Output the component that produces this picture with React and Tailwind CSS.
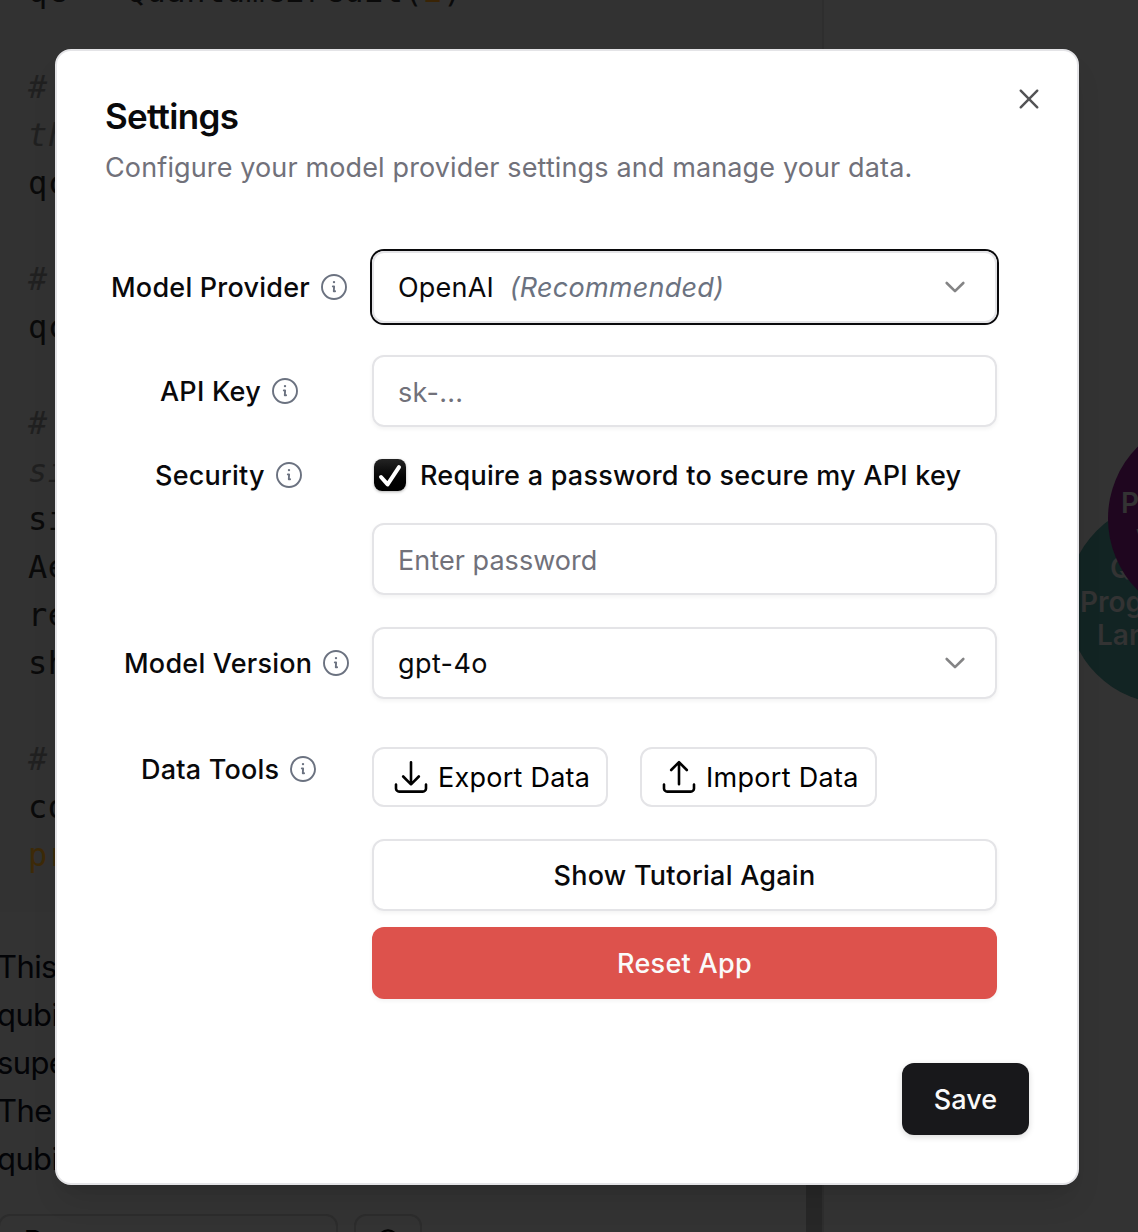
import React from "react";
import { RxCross2 } from "react-icons/rx";

function InfoIcon() {
  return (
    <svg viewBox="0 0 28 28" className="size-7 shrink-0" fill="none" stroke="#6b7280" strokeWidth="1.9" strokeLinecap="round" strokeLinejoin="round">
      <circle cx="14" cy="14" r="12" />
      <circle cx="14" cy="9.1" r="1.2" fill="#6b7280" stroke="none" />
      <path d="M12.8 13.4h1.3l-.3 4.9h1.3" />
    </svg>
  );
}

function ChevronIcon() {
  return (
    <svg viewBox="0 0 32 32" className="-mt-[2px] size-8 shrink-0" fill="none" stroke="#848485" strokeWidth="2.6" strokeLinecap="round" strokeLinejoin="round">
      <path d="M7.7 12l8.3 8.2 8.3-8.2" />
    </svg>
  );
}

function TrayIcon({ up }) {
  return (
    <svg viewBox="0 0 36 36" className="-mt-[2px] size-9 shrink-0" fill="none" stroke="#000" strokeWidth="2.6" strokeLinecap="round" strokeLinejoin="round">
      <path d="M3 25.5v3.9a3.2 3.2 0 0 0 3.2 3.2h23.6a3.2 3.2 0 0 0 3.2-3.2v-3.9" />
      <path d={up ? "M18 25.3V3.4M10.2 11l7.8-7.8 7.8 7.8" : "M18 3.2v22M10.2 17.5l7.8 7.8 7.8-7.8"} />
    </svg>
  );
}

function Label({ children, className }) {
  return (
    <div className={`flex h-10 items-center gap-[10px] whitespace-nowrap font-medium tracking-[0.22px] ${className}`}>
      <span className="pt-[2px]">{children}</span>
      <InfoIcon />
    </div>
  );
}

const field = "flex h-[72px] w-[625px] items-center rounded-xl border-2 border-[#e4e4e7] px-6 shadow-[0_2px_4px_rgba(0,0,0,0.05)]";

function CodeLine({ children, className = "text-[#0a0a0a]" }) {
  return <div className={`h-12 whitespace-pre ${className}`}>{children}</div>;
}

function Backdrop() {
  return (
    <div className="absolute inset-0 overflow-hidden bg-[#333333]">
      <div className="flex h-full">
        <div className="flex w-[822px] shrink-0 flex-col">
          <div className="h-[912px] shrink-0 overflow-hidden bg-[#323232] pl-[28px] font-['DejaVu_Sans_Mono',monospace] text-[32px] leading-[48px] tracking-[0.5px]">
            <div className="-mt-[33px]">
              <CodeLine>qc = QuantumCircuit(<span className="text-[#3a2405]">2</span>)</CodeLine>
              <CodeLine> </CodeLine>
              <CodeLine className="italic text-[#202020]"># </CodeLine>
              <CodeLine className="italic text-[#202020]">th</CodeLine>
              <CodeLine>qc</CodeLine>
              <CodeLine> </CodeLine>
              <CodeLine className="italic text-[#202020]"># </CodeLine>
              <CodeLine>qc</CodeLine>
              <CodeLine> </CodeLine>
              <CodeLine className="italic text-[#202020]"># </CodeLine>
              <CodeLine className="italic text-[#202020]">si</CodeLine>
              <CodeLine>si</CodeLine>
              <CodeLine>Ae</CodeLine>
              <CodeLine>re</CodeLine>
              <CodeLine>sh</CodeLine>
              <CodeLine> </CodeLine>
              <CodeLine className="italic text-[#202020]"># </CodeLine>
              <CodeLine>co</CodeLine>
              <CodeLine className="text-[#3d2a08]">pr</CodeLine>
            </div>
          </div>
          <div className="-ml-[3px] mt-[31px] text-[31px] leading-[48px] tracking-[-0.6px] text-[#030407]">
            <div>This</div>
            <div>qubi</div>
            <div>supe</div>
            <div>The</div>
            <div>qubi</div>
          </div>
          <div className="-ml-[2px] mt-[31px] flex gap-4">
            <div className="h-16 w-[340px] rounded-xl border-2 border-[#2c2c2c] pl-6 pt-[9px] text-[28px] font-medium leading-8 text-black">Run</div>
            <div className="flex h-16 w-[68px] justify-center rounded-xl border-2 border-[#2c2c2c] pt-[12px]">
              <svg viewBox="0 0 24 24" className="size-7" fill="none" stroke="#000" strokeWidth="2"><circle cx="12" cy="10" r="8" /></svg>
            </div>
          </div>
        </div>
        <div className="w-[2px] shrink-0 bg-[#2e2e2e]" />
      </div>
      <div className="absolute left-[806px] top-[1184px] h-12 w-4 bg-[#272727]" />
      <div className="absolute left-[1067px] top-[501px] size-[203px] rounded-full bg-[#122423] text-[28px] font-semibold leading-[33px] text-[#333333]">
        <div className="absolute left-[43px] top-[51px]">Q</div>
        <div className="absolute left-[13px] top-[85px]">Progr</div>
        <div className="absolute left-[30px] top-[118px]">Lang</div>
      </div>
      <div className="absolute left-[1108px] top-[417px] size-[203px] rounded-full bg-[#1f061f] text-[28px] font-semibold leading-[33px] text-[#333333]">
        <div className="absolute left-[13px] top-[70px]">Pr</div>
        <div className="absolute left-[28px] top-[102px]">w</div>
      </div>
    </div>
  );
}

export default function App() {
  return (
    <div className="relative h-[1232px] w-[1138px] overflow-hidden font-[Inter,sans-serif] text-[27px] leading-10 text-[#09090b]">
      <Backdrop />
      <div role="dialog" className="absolute left-[55px] top-[49px] flex h-[1136px] w-[1024px] flex-col rounded-2xl border-2 border-[#e4e4e7] bg-white tracking-[0.2px] shadow-[0_20px_30px_-6px_rgba(0,0,0,0.1),0_8px_12px_-8px_rgba(0,0,0,0.1)]">
        <RxCross2 className="absolute right-8 top-8 size-8 text-[#535355]" />
        <h2 className="ml-12 mt-[47px] text-[35px] font-semibold leading-9 tracking-[-0.7px]">Settings</h2>
        <p className="ml-12 mt-[14px] tracking-[0.13px] text-[#71717a]">Configure your model provider settings and manage your data.</p>

        <div className="mt-[63px] flex flex-col">
          <div className="flex h-[72px] items-center">
            <div className="w-[315px] shrink-0"><Label className="ml-[54px]">Model Provider</Label></div>
            <div className={`${field} justify-between pt-[2px] ring-2 ring-[#09090b]`}>
              <span>OpenAI <em className="ml-2 tracking-[0.24px] text-[#6b7280]">(Recommended)</em></span>
              <ChevronIcon />
            </div>
          </div>
          <div className="mt-8 flex h-[72px] items-center">
            <div className="w-[315px] shrink-0"><Label className="ml-[103px]">API Key</Label></div>
            <div className={`${field} pt-[3px] tracking-[0.3px] text-[#71717a]`}>sk-...</div>
          </div>
          <div className="mt-7 flex h-10 items-center">
            <div className="w-[315px] shrink-0"><Label className="ml-[98px]">Security</Label></div>
            <div className="ml-[2px] flex h-10 items-center gap-[14px] font-medium tracking-[0.24px]">
              <div className="size-8 rounded-lg bg-gradient-to-b from-[#242424] to-black shadow-[0_1px_3px_rgba(0,0,0,0.3)]">
                <svg viewBox="0 0 32 32" className="size-8" fill="none" stroke="#fff" strokeWidth="4" strokeLinecap="round" strokeLinejoin="round"><path d="M7 18l6.6 7.4L25 8.2" /></svg>
              </div>
              <span className="pt-[2px]">Require a password to secure my API key</span>
            </div>
          </div>
          <div className={`${field} ml-[315px] mt-7 pt-[3px] tracking-[0.05px] text-[#71717a]`}>Enter password</div>
          <div className="mt-8 flex h-[72px] items-center">
            <div className="w-[315px] shrink-0"><Label className="ml-[67px]">Model Version</Label></div>
            <div className={`${field} justify-between pt-[2px] tracking-[0.4px]`}>
              <span>gpt-4o</span>
              <ChevronIcon />
            </div>
          </div>
          <div className="mt-12 flex h-[60px]">
            <div className="w-[315px] shrink-0 pt-[2px]"><Label className="ml-[84px]">Data Tools</Label></div>
            <button className="flex h-[60px] w-[236px] items-center gap-[9px] rounded-xl border-2 border-[#e4e4e7] pl-[19px] pt-[2px] tracking-[0.25px] text-black"><TrayIcon /><span className="whitespace-nowrap">Export Data</span></button>
            <button className="ml-8 flex h-[60px] w-[237px] items-center gap-[9px] rounded-xl border-2 border-[#e4e4e7] pl-[19px] pt-[2px] tracking-[0.3px] text-black"><TrayIcon up /><span className="whitespace-nowrap">Import Data</span></button>
          </div>
          <button className={`${field} ml-[315px] mt-8 justify-center pt-[2px] font-medium tracking-[0.24px]`}>Show Tutorial Again</button>
          <button className="ml-[315px] mt-4 h-[72px] w-[625px] rounded-xl bg-[#dd524c] pt-[2px] font-medium tracking-[0.3px] text-[#fafafa] shadow-[0_2px_4px_rgba(0,0,0,0.05)]">Reset App</button>
        </div>
        <button className="ml-auto mr-12 mt-16 h-[72px] w-[127px] rounded-xl bg-[#18181b] pt-[2px] font-medium tracking-[0.1px] text-[#fafafa] shadow-[0_2px_6px_rgba(0,0,0,0.15)]">Save</button>
      </div>
    </div>
  );
}
